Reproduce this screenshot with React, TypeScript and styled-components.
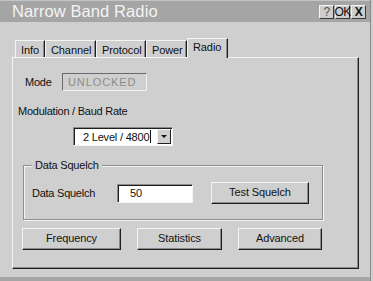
import React from 'react';
import styled, { createGlobalStyle } from 'styled-components';

const GlobalStyle = createGlobalStyle`
  html, body {
    margin: 0;
    padding: 0;
    background: #cfcfcf;
  }
  body {
    font-family: "Liberation Sans", Arial, sans-serif;
  }
`;

const Window = styled.div`
  width: 373px;
  height: 281px;
  padding-right: 2px;
  box-sizing: border-box;
  background: #cfcfcf;
  display: flex;
  overflow: hidden;
`;

const Frame = styled.div`
  flex: 1;
  display: flex;
  flex-direction: column;
  border-right: 1px solid #8a8a8a;
`;

const TitleBar = styled.div`
  height: 22px;
  background: #a5a5a5;
  display: flex;
  align-items: center;
  justify-content: space-between;
  padding: 0 4px 0 12px;
  border-top: 1px solid #c4c4c4;
  box-sizing: border-box;
`;

const Title = styled.span`
  color: #f4f4f4;
  font-size: 16.5px;
  letter-spacing: 0.1px;
`;

const TitleButtons = styled.div`
  display: flex;
  gap: 1px;
`;

const TitleButton = styled.div<{ $bold?: boolean; $dim?: boolean }>`
  width: 15px;
  height: 14px;
  box-sizing: border-box;
  background: #cdcdcd;
  border-top: 1px solid #f2f2f2;
  border-left: 1px solid #f2f2f2;
  border-right: 1px solid #3a3a3a;
  border-bottom: 1px solid #3a3a3a;
  display: flex;
  align-items: center;
  justify-content: center;
  font-size: 12px;
  line-height: 12px;
  font-weight: ${p => (p.$bold ? 'bold' : 'normal')};
  color: ${p => (p.$dim ? '#555' : '#111')};
  overflow: visible;
  white-space: nowrap;
  letter-spacing: -0.6px;
`;

const Body = styled.div`
  flex: 1;
  padding: 16px 0 0 12px;
`;

const TabStrip = styled.div`
  display: flex;
  align-items: flex-end;
  height: 19px;
  margin-left: 3px;
  position: relative;
  z-index: 1;
`;

const Tab = styled.div<{ $active?: boolean; $w: number }>`
  width: ${p => p.$w}px;
  height: ${p => (p.$active ? 20 : 17)}px;
  box-sizing: border-box;
  background: #cfcfcf;
  border-left: 1px solid #f4f4f4;
  border-top: 1px solid #f4f4f4;
  border-right: 1px solid #1e1e1e;
  box-shadow: inset -1px 0 0 #8a8a8a;
  margin-bottom: ${p => (p.$active ? -1 : 0)}px;
  font-size: 11px;
  letter-spacing: -0.1px;
  color: #111;
  padding: ${p => (p.$active ? '2px 0 0 5px' : '3px 0 0 5px')};
  white-space: nowrap;
`;

const Panel = styled.div`
  width: 347px;
  height: 212px;
  box-sizing: border-box;
  border-top: 1px solid #f4f4f4;
  border-left: 1px solid #f4f4f4;
  border-right: 1px solid #1e1e1e;
  border-bottom: 1px solid #1e1e1e;
  box-shadow: inset -1px -1px 0 #8a8a8a;
  display: flex;
  flex-direction: column;
`;

const Row = styled.div<{ $indent: number; $top: number; $gap?: number }>`
  display: flex;
  align-items: center;
  margin-left: ${p => p.$indent}px;
  margin-top: ${p => p.$top}px;
  gap: ${p => p.$gap ?? 0}px;
`;

const Label = styled.span<{ $w?: number }>`
  font-size: 11px;
  letter-spacing: -0.25px;
  color: #111;
  line-height: 14px;
  width: ${p => (p.$w ? `${p.$w}px` : 'auto')};
  white-space: nowrap;
`;

const ReadOnlyField = styled.div`
  width: 85px;
  height: 18px;
  box-sizing: border-box;
  border-top: 1px solid #6a6a6a;
  border-left: 1px solid #6a6a6a;
  border-right: 1px solid #f2f2f2;
  border-bottom: 1px solid #f2f2f2;
  color: #8c8c8c;
  font-size: 11px;
  letter-spacing: 0.9px;
  padding: 2px 0 0 5px;
`;

const Sunken = styled.div<{ $w: number; $h: number }>`
  width: ${p => p.$w}px;
  height: ${p => p.$h}px;
  box-sizing: border-box;
  background: #fff;
  border-top: 1px solid #8a8a8a;
  border-left: 1px solid #8a8a8a;
  border-right: 1px solid #f4f4f4;
  border-bottom: 1px solid #f4f4f4;
  box-shadow: inset 1px 1px 0 #1e1e1e;
  display: flex;
  align-items: center;
  font-size: 11px;
  letter-spacing: -0.2px;
  color: #111;
`;

const ComboText = styled.span`
  padding-left: 9px;
  flex: 1;
  display: flex;
  align-items: center;
`;

const Caret = styled.span`
  width: 1px;
  height: 13px;
  background: #111;
  margin-left: 1px;
`;

const DropButton = styled.div`
  width: 14px;
  height: 15px;
  box-sizing: border-box;
  margin-right: 1px;
  background: #cfcfcf;
  border-top: 1px solid #f4f4f4;
  border-left: 1px solid #f4f4f4;
  border-right: 1px solid #1e1e1e;
  border-bottom: 1px solid #1e1e1e;
  display: flex;
  align-items: center;
  justify-content: center;
`;

const Arrow = styled.span`
  width: 0;
  height: 0;
  border-left: 3px solid transparent;
  border-right: 3px solid transparent;
  border-top: 3px solid #111;
`;

const GroupBox = styled.div`
  position: relative;
  margin: 19px 0 0 10px;
  width: 300px;
  height: 55px;
  box-sizing: border-box;
  border: 1px solid #8e8e8e;
  box-shadow: 1px 1px 0 #f4f4f4, inset 1px 1px 0 #f4f4f4;
  padding: 16px 0 0 8px;
  display: flex;
  align-items: flex-start;
`;

const Legend = styled.span`
  position: absolute;
  top: -8px;
  left: 8px;
  padding: 0 3px;
  background: #cfcfcf;
  font-size: 11px;
  letter-spacing: -0.2px;
  color: #111;
  line-height: 14px;
`;

const GroupRow = styled.div`
  display: flex;
  align-items: center;
  height: 22px;
  gap: 18px;
`;

const LabeledField = styled.div`
  display: flex;
  align-items: center;
`;

const FieldText = styled.span`
  padding-left: 12px;
`;

const Button = styled.div<{ $w: number }>`
  width: ${p => p.$w}px;
  height: 22px;
  box-sizing: border-box;
  background: #cfcfcf;
  border-top: 1px solid #f4f4f4;
  border-left: 1px solid #f4f4f4;
  border-right: 1px solid #1e1e1e;
  border-bottom: 1px solid #1e1e1e;
  box-shadow: inset -1px -1px 0 #8a8a8a;
  display: flex;
  align-items: center;
  justify-content: center;
  font-size: 11px;
  letter-spacing: -0.1px;
  color: #111;
  padding-bottom: 2px;
`;

const BottomBand = styled.div`
  height: 4px;
  background: #a6a6a6;
`;

const tabs = [
  { label: 'Info', w: 30 },
  { label: 'Channel', w: 51 },
  { label: 'Protocol', w: 50 },
  { label: 'Power', w: 41 },
  { label: 'Radio', w: 41, active: true },
];

export default function App() {
  return (
    <>
      <GlobalStyle />
      <Window>
        <Frame>
          <TitleBar>
            <Title>Narrow Band Radio</Title>
            <TitleButtons>
              <TitleButton $dim>?</TitleButton>
              <TitleButton>OK</TitleButton>
              <TitleButton $bold>X</TitleButton>
            </TitleButtons>
          </TitleBar>
          <Body>
            <TabStrip>
              {tabs.map(t => (
                <Tab key={t.label} $w={t.w} $active={t.active}>
                  {t.label}
                </Tab>
              ))}
            </TabStrip>
            <Panel>
              <Row $indent={12} $top={15}>
                <Label $w={37}>Mode</Label>
                <ReadOnlyField>UNLOCKED</ReadOnlyField>
              </Row>
              <Row $indent={5} $top={13}>
                <Label>Modulation / Baud Rate</Label>
              </Row>
              <Row $indent={60} $top={9}>
                <Sunken $w={100} $h={19}>
                  <ComboText>
                    2 Level / 4800
                    <Caret />
                  </ComboText>
                  <DropButton>
                    <Arrow />
                  </DropButton>
                </Sunken>
              </Row>
              <GroupBox>
                <Legend>Data Squelch</Legend>
                <GroupRow>
                  <LabeledField>
                    <Label $w={85}>Data Squelch</Label>
                    <Sunken $w={76} $h={19}>
                      <FieldText>50</FieldText>
                    </Sunken>
                  </LabeledField>
                  <Button $w={98}>Test Squelch</Button>
                </GroupRow>
              </GroupBox>
              <Row $indent={9} $top={8} $gap={16}>
                <Button $w={99}>Frequency</Button>
                <Button $w={85}>Statistics</Button>
                <Button $w={84}>Advanced</Button>
              </Row>
            </Panel>
          </Body>
          <BottomBand />
        </Frame>
      </Window>
    </>
  );
}
